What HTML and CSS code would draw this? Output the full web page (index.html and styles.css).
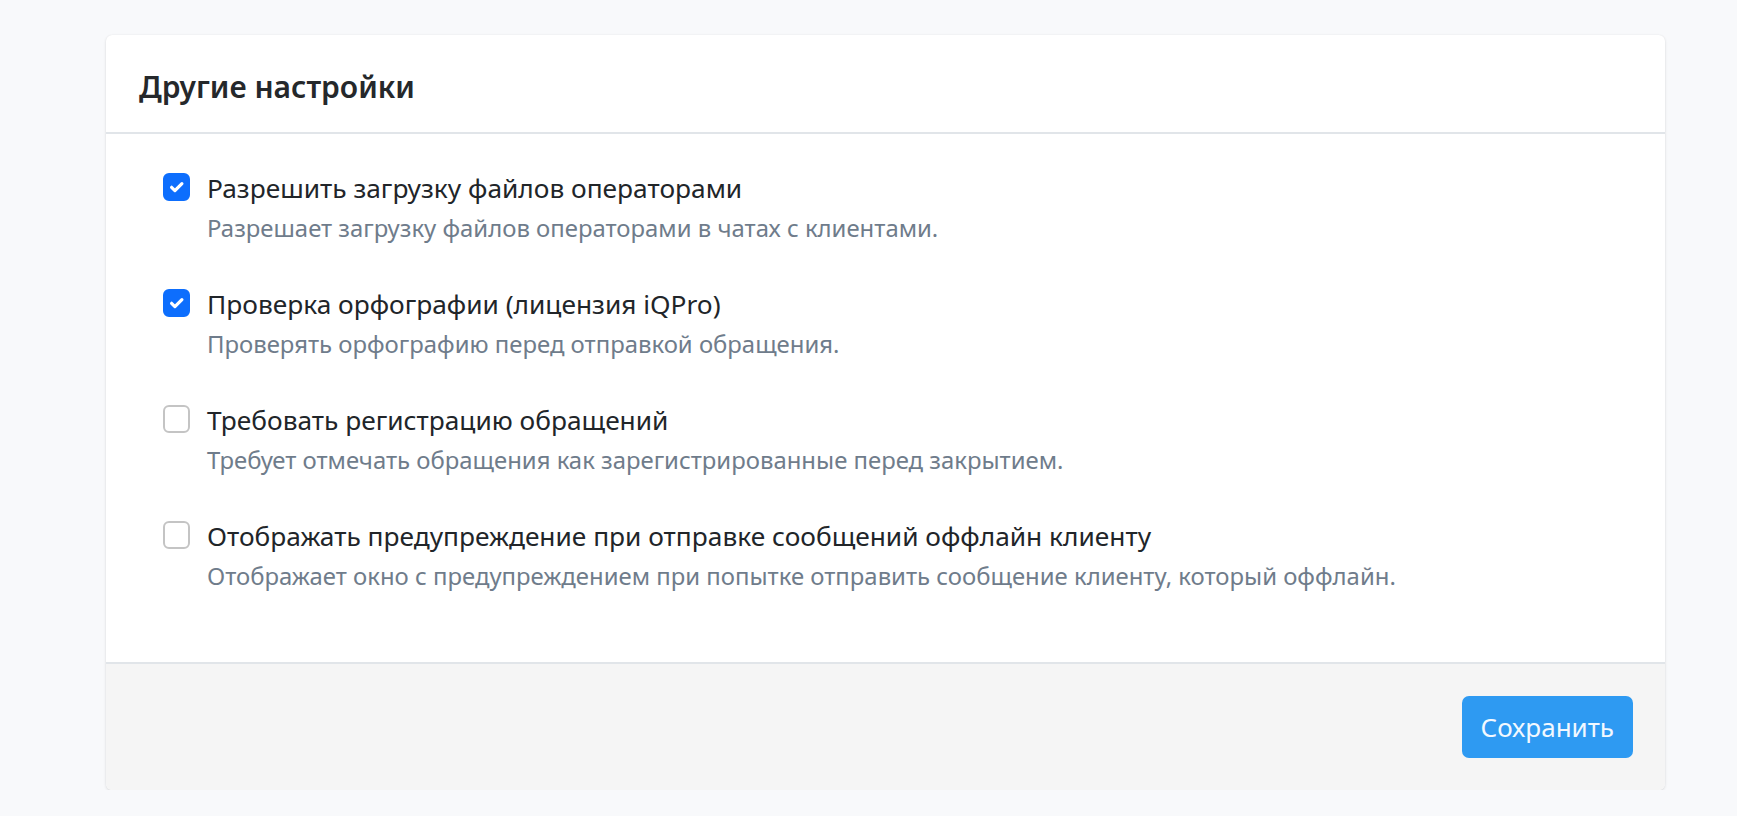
FILE: index.html
```html
<!DOCTYPE html>
<html lang="ru">
<head>
<meta charset="utf-8">
<title>Другие настройки</title>
<link rel="stylesheet" href="styles.css">
</head>
<body>
<div class="card">
  <div class="card-header">
    <h5 class="card-title">Другие настройки</h5>
  </div>
  <div class="card-body">
    <div class="check-row">
      <span class="box checked"><svg class="tick" viewBox="0 0 27 28" width="27" height="28"><path d="M8.6 14.3l3.3 3.3 7-7" fill="none" stroke="#fff" stroke-width="3.2" stroke-linecap="round" stroke-linejoin="round"/></svg></span>
      <div class="check-text">
        <div class="label">Разрешить загрузку файлов операторами</div>
        <div class="desc">Разрешает загрузку файлов операторами в чатах с клиентами.</div>
      </div>
    </div>
    <div class="check-row">
      <span class="box checked"><svg class="tick" viewBox="0 0 27 28" width="27" height="28"><path d="M8.6 14.3l3.3 3.3 7-7" fill="none" stroke="#fff" stroke-width="3.2" stroke-linecap="round" stroke-linejoin="round"/></svg></span>
      <div class="check-text">
        <div class="label">Проверка орфографии (лицензия iQPro)</div>
        <div class="desc">Проверять орфографию перед отправкой обращения.</div>
      </div>
    </div>
    <div class="check-row">
      <span class="box"></span>
      <div class="check-text">
        <div class="label">Требовать регистрацию обращений</div>
        <div class="desc">Требует отмечать обращения как зарегистрированные перед закрытием.</div>
      </div>
    </div>
    <div class="check-row">
      <span class="box"></span>
      <div class="check-text">
        <div class="label">Отображать предупреждение при отправке сообщений оффлайн клиенту</div>
        <div class="desc">Отображает окно с предупреждением при попытке отправить сообщение клиенту, который оффлайн.</div>
      </div>
    </div>
  </div>
  <div class="card-footer">
    <button class="btn">Сохранить</button>
  </div>
</div>
</body>
</html>
```
FILE: styles.css
```css
html, body {
  margin: 0;
  padding: 0;
}
body {
  background: #f8f9fb;
  font-family: "Noto Sans", "Open Sans", sans-serif;
  color: #212529;
  padding: 35px 0 0 106px;
}
.card {
  width: 1559px;
  background: #fff;
  border-radius: 6px;
  box-shadow: 0 1px 3px rgba(0, 0, 0, 0.12), 0 0 1px rgba(0, 0, 0, 0.08);
  overflow: hidden;
}
.card-header {
  padding: 32px 33px 25px;
  border-bottom: 2px solid #e1e5e9;
}
.card-title {
  margin: 0;
  font-size: 30px;
  line-height: 40px;
  font-weight: 600;
  color: #25282b;
}
.card-body {
  padding: 36px 33px 70px 57px;
  display: flex;
  flex-direction: column;
  gap: 42px;
}
.check-row {
  display: flex;
  align-items: flex-start;
  gap: 17px;
}
.box {
  flex: none;
  position: relative;
  width: 27px;
  height: 28px;
  margin-top: 3px;
  box-sizing: border-box;
  border: 2px solid #c4c4c4;
  border-radius: 6px;
  background: #fff;
}
.box.checked {
  background: #0d6efd;
  border-color: #0d6efd;
}
.tick {
  position: absolute;
  left: -2px;
  top: -2px;
}
.label {
  font-size: 26.3px;
  line-height: 36px;
  color: #212529;
}
.desc {
  margin-top: 6px;
  font-size: 23.9px;
  line-height: 32px;
  color: #6f7c8b;
}
.card-footer {
  background: #f5f5f5;
  border-top: 2px solid #e1e5e9;
  padding: 32px;
  display: flex;
  justify-content: flex-end;
}
.btn {
  height: 62px;
  padding: 0 19px;
  border: none;
  border-radius: 7px;
  background: #2e9af2;
  color: #f2f8ff;
  font-family: "Noto Sans", "Open Sans", sans-serif;
  font-size: 26px;
  line-height: 62px;
  cursor: pointer;
}
```
